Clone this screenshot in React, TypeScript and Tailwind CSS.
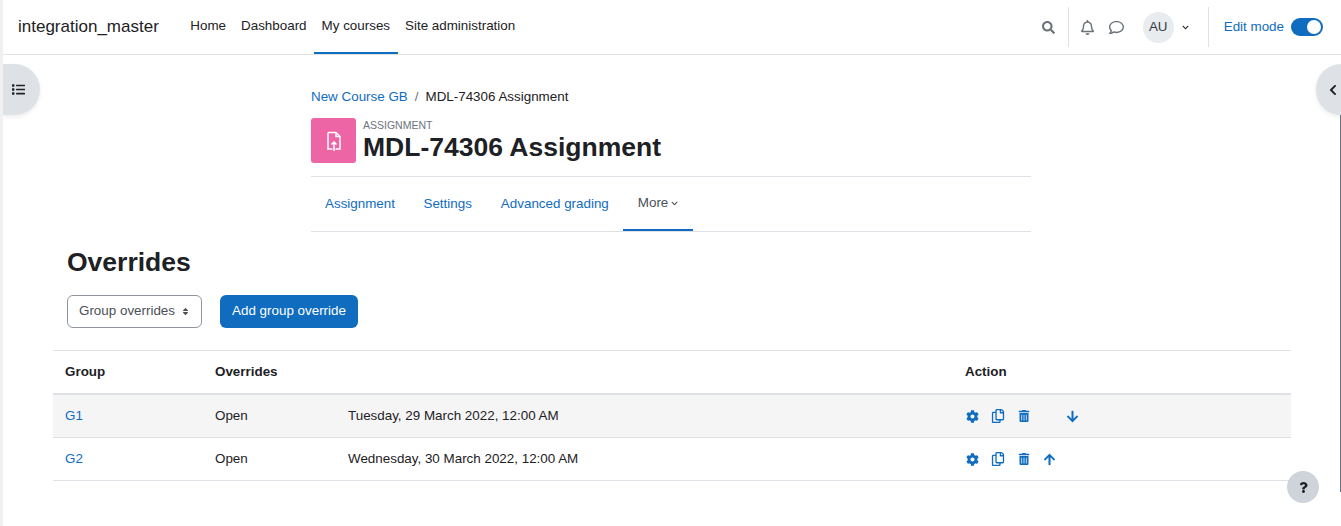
import { FaSearch, FaRegBell, FaRegComment, FaChevronDown, FaChevronLeft, FaList, FaQuestion, FaCog, FaRegCopy, FaTrashAlt, FaArrowDown, FaArrowUp, FaSort } from "react-icons/fa"

const navLinks = ["Home", "Dashboard", "My courses", "Site administration"]

function Navbar() {
  return (
    <header className="flex h-[55px] items-center border-b border-[#dee2e6] bg-white pl-[15px] pr-[18px]">
      <span className="text-[17px] text-[#1d2125]">integration_master</span>
      <nav className="ml-[24px] flex h-full items-center">
        {navLinks.map((link) => (
          <a
            key={link}
            className={
              "flex h-full items-center px-[7.5px] pt-px text-[13.4px] text-[#1d2125] " +
              (link === "My courses" ? "border-b-2 border-[#0f6cbf]" : "border-b-2 border-transparent")
            }
          >
            {link}
          </a>
        ))}
      </nav>
      <div className="ml-auto flex h-full items-center">
        <FaSearch className="mr-[13px] text-[13px] text-[#6a737b]" />
        <div className="h-[40px] w-px bg-[#dee2e6]" />
        <FaRegBell className="ml-[11px] text-[15px] text-[#6a737b]" />
        <FaRegComment className="ml-[14px] text-[15px] text-[#6a737b]" />
        <div className="ml-[19px] flex h-[31px] w-[31px] items-center justify-center rounded-full bg-[#e9ecef] text-[13.4px] text-[#343a40]">
          AU
        </div>
        <FaChevronDown className="ml-[8px] text-[7px] text-[#1d2125]" />
        <div className="ml-[19px] h-[40px] w-px bg-[#dee2e6]" />
        <a className="ml-[15px] text-[13.4px] text-[#0f6cbf]">Edit mode</a>
        <div className="ml-[7px] flex h-[18px] w-[32px] items-center justify-end rounded-full bg-[#0f6cbf] pr-[2px]">
          <div className="h-[14px] w-[14px] rounded-full bg-white" />
        </div>
      </div>
    </header>
  )
}

function CourseHeader() {
  return (
    <div className="ml-[308px] w-[720px] pt-[34px]">
      <div className="flex text-[13.4px] leading-[16px]">
        <a className="text-[#0f6cbf]">New Course GB</a>
        <span className="mx-[7px] text-[#6a737b]">/</span>
        <span className="text-[#1d2125]">MDL-74306 Assignment</span>
      </div>
      <div className="mt-[13px] flex h-[45px]">
        <div className="flex h-[45px] w-[45px] items-center justify-center rounded-[3px] bg-[#ee65a5]">
          <svg width="24" height="24" viewBox="0 0 24 24" fill="none" stroke="white" strokeWidth="1.5">
            <path d="M6 3.5h8l4 4v12.5h-4.5M10.500 20H6V3.500" />
            <path d="M14 3.500v4h4" />
            <path d="M12 22v-9M9.500 15.500 12 13l2.500 2.500" />
          </svg>
        </div>
        <div className="ml-[7px]">
          <div className="text-[10.500px] leading-[14px] text-[#6a737b]">ASSIGNMENT</div>
          <h1 className="text-[26.500px] font-bold leading-[30px] text-[#1d2125]">MDL-74306 Assignment</h1>
        </div>
      </div>
      <div className="mt-[13px] flex h-[56px] border-y border-[#dee2e6] text-[13.4px]">
        <a className="flex items-center px-[14px] text-[#0f6cbf]">Assignment</a>
        <a className="flex items-center px-[14.500px] text-[#0f6cbf]">Settings</a>
        <a className="flex items-center px-[14.500px] text-[#0f6cbf]">Advanced grading</a>
        <a className="flex items-center gap-[3px] border-b-2 border-[#0f6cbf] px-[14.500px] text-[#495057]">
          More <FaChevronDown className="text-[7px]" />
        </a>
      </div>
    </div>
  )
}

function ActionIcons({ down }: { down: boolean }) {
  return (
    <div className="flex items-center text-[13px] text-[#0f6cbf]">
      <FaCog className="ml-px" />
      <FaRegCopy className="ml-[12px] text-[14px]" />
      <FaTrashAlt className="ml-[13px] text-[12px]" />
      {down ? <FaArrowDown className="ml-[36px]" /> : <FaArrowUp className="ml-[13px]" />}
    </div>
  )
}

function OverridesTable() {
  const rows = [
    { group: "G1", date: "Tuesday, 29 March 2022, 12:00 AM", down: true },
    { group: "G2", date: "Wednesday, 30 March 2022, 12:00 AM", down: false },
  ]
  return (
    <div className="ml-[50px] mr-[50px] mt-[22px] border-t border-[#dee2e6] text-[13.4px] text-[#1d2125]">
      <div className="flex h-[44px] items-center border-b-2 border-[#dee2e6] font-bold">
        <div className="w-[162px] pl-[12px]">Group</div>
        <div className="w-[750px]">Overrides</div>
        <div>Action</div>
      </div>
      {rows.map((r, i) => (
        <div key={r.group} className={"flex h-[43px] items-center border-b border-[#dee2e6] " + (i === 0 ? "bg-[#f5f5f5]" : "")}>
          <a className="w-[162px] pl-[12px] text-[#0f6cbf]">{r.group}</a>
          <div className="w-[133px]">Open</div>
          <div className="w-[617px]">{r.date}</div>
          <ActionIcons down={r.down} />
        </div>
      ))}
    </div>
  )
}

export default function App() {
  return (
    <div className="relative h-[526px] overflow-hidden border-l-[3px] border-[#f0f0f0] bg-white font-['Liberation_Sans',Arial,sans-serif]">
      <Navbar />
      <CourseHeader />
      <div className="ml-[64px] mt-[12px]">
        <h2 className="text-[26.500px] font-bold leading-[36px] text-[#1d2125]">Overrides</h2>
        <div className="mt-[15px] flex items-center">
          <div className="flex h-[33px] w-[135px] items-center justify-between rounded-[6px] border border-[#8f959e] pl-[11px] pr-[11px] text-[13.4px] text-[#495057]">
            Group overrides
            <FaSort className="text-[9px]" />
          </div>
          <button className="ml-[18px] h-[33px] w-[138px] rounded-[6px] bg-[#0f6cbf] text-[13.4px] text-white">
            Add group override
          </button>
        </div>
      </div>
      <OverridesTable />

      <div className="absolute left-0 top-[64px] flex h-[51px] w-[37px] items-center justify-center rounded-r-full bg-[#dee2e6] pr-[6px] shadow-[0_2px_4px_rgba(0,0,0,0.08)]">
        <FaList className="text-[13px] text-[#1d2125]" />
      </div>
      <div className="absolute right-0 top-[64px] flex h-[51px] w-[25px] items-center justify-end rounded-l-full bg-[#dee2e6] pr-[2px] shadow-[0_2px_4px_rgba(0,0,0,0.08)]">
        <FaChevronLeft className="text-[12px] text-[#1d2125]" />
      </div>
      <div className="absolute right-0 top-[115px] h-[377px] w-px bg-[#6a737b]" />
      <div className="absolute left-[1284px] top-[471px] flex h-[32px] w-[32px] items-center justify-center rounded-full bg-[#ced4da]">
        <FaQuestion className="text-[11px] text-[#1d2125]" />
      </div>
    </div>
  )
}
